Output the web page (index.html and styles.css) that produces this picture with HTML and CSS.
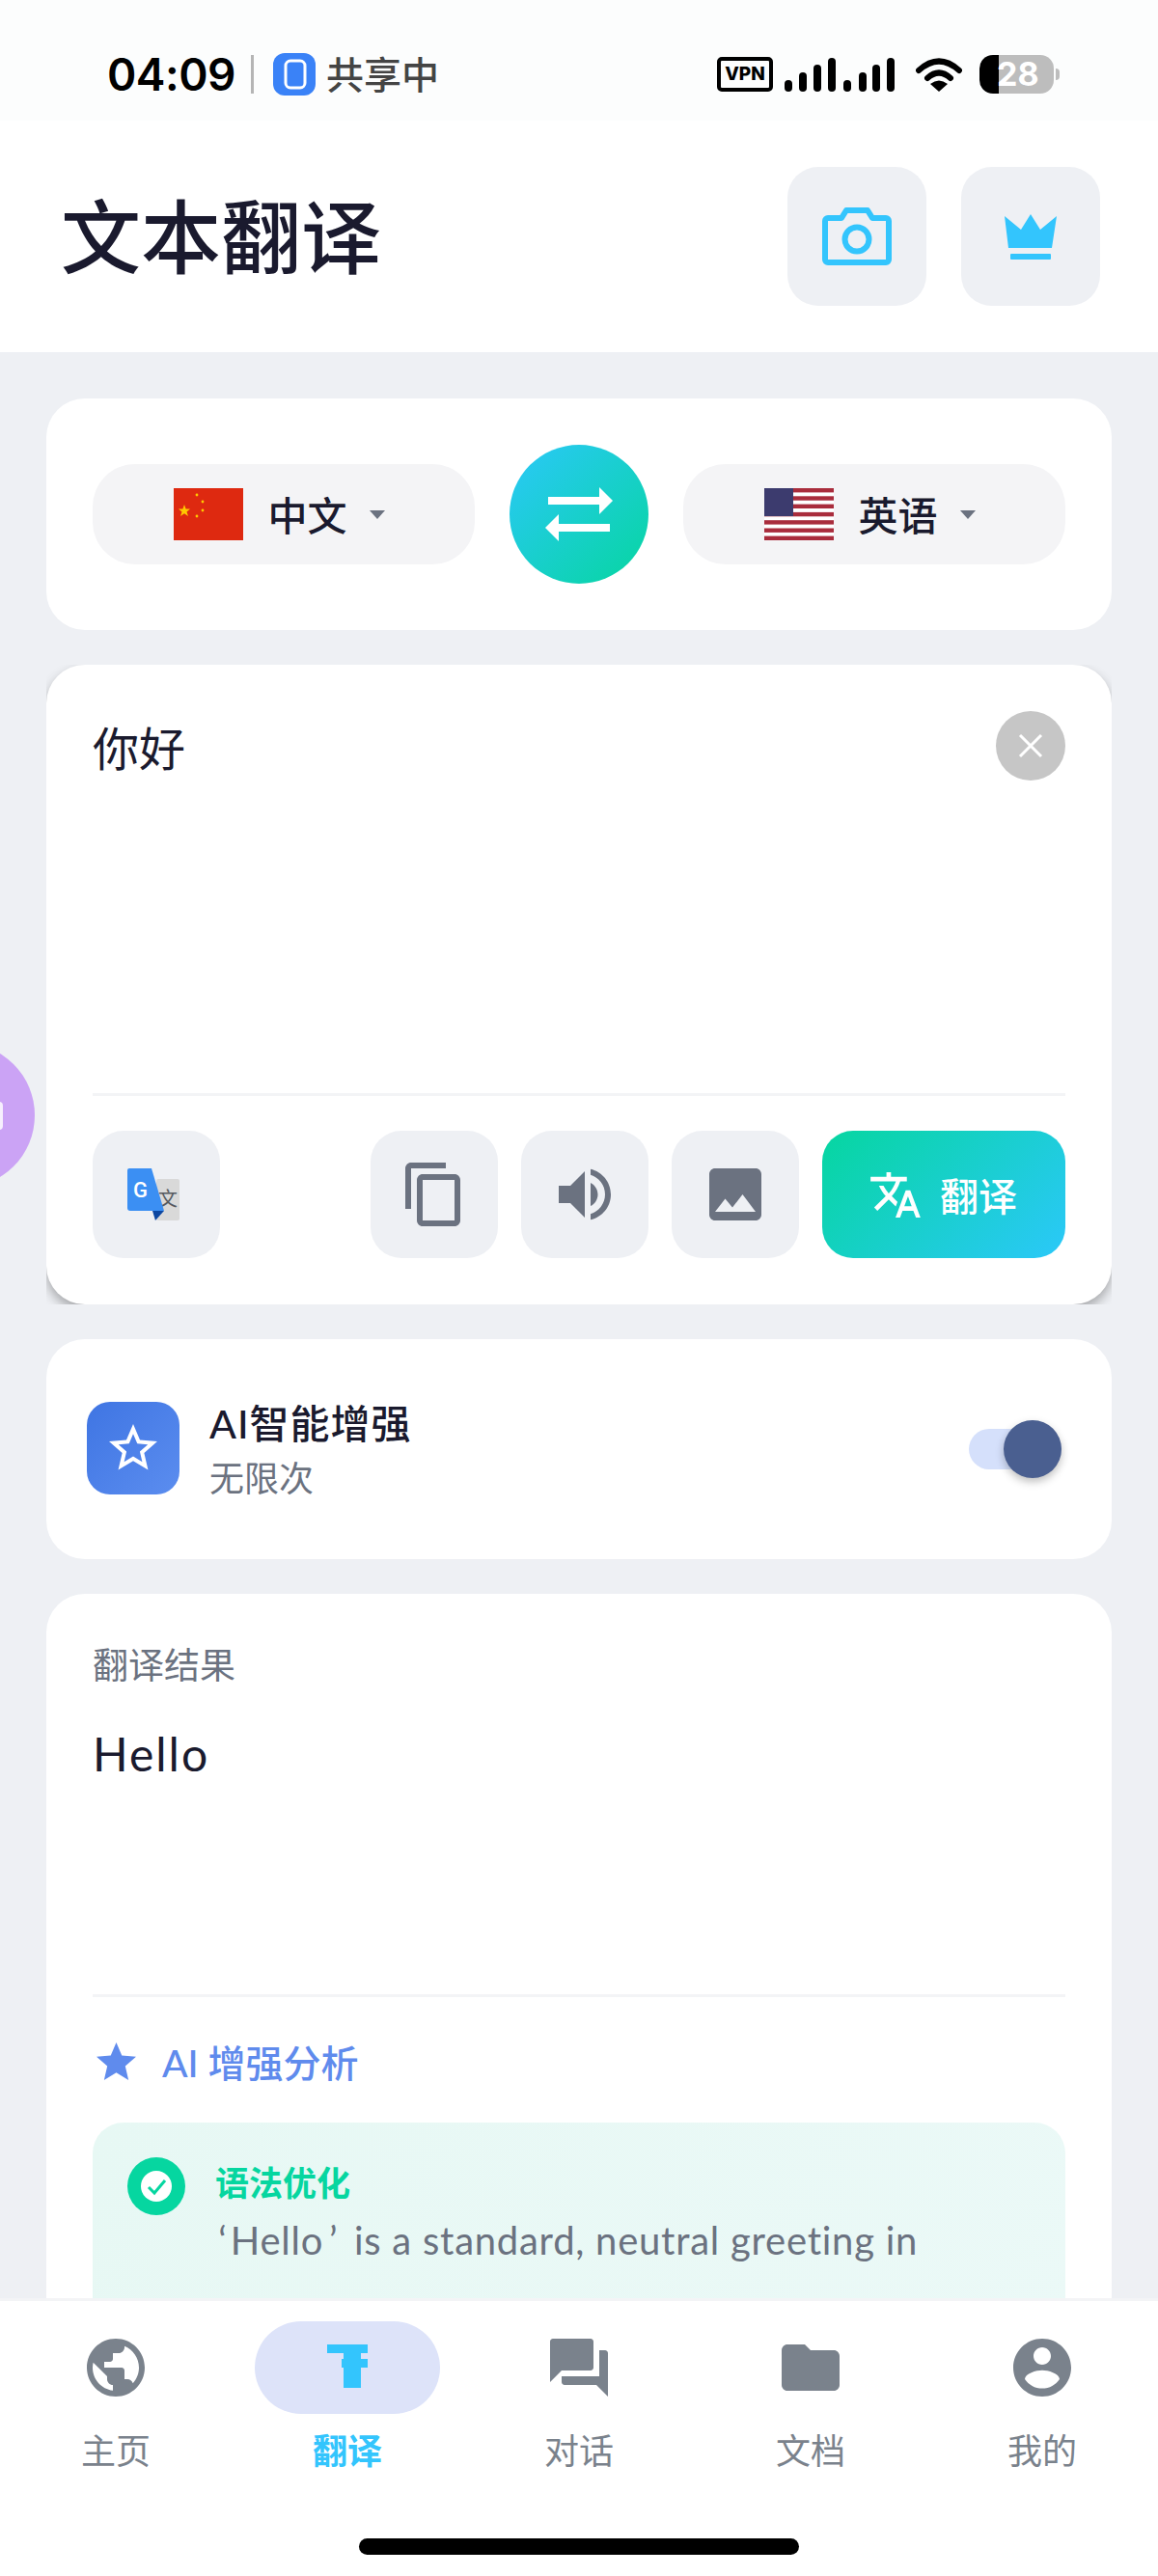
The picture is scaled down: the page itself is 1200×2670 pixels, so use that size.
FILE: index.html

```html
<!DOCTYPE html>
<html>
<head>
<meta name="viewport" content="width=device-width, initial-scale=1">
<link rel="stylesheet" href="styles.css">
</head>
<body>

<div class="phone">

  <div class="float-ball"><span class="float-mark"></span></div>

  <div class="statusbar">
    <div class="status-left">
      <span class="time">04:09</span>
      <span class="status-sep"></span>
      <svg class="share-icon" viewBox="0 0 44 44">
        <rect width="44" height="44" rx="12" fill="#3a82f7"/>
        <rect x="13" y="8" width="20" height="28" rx="5" fill="#3a82f7" stroke="#fff" stroke-width="3"/>
      </svg>
      <span class="share-text">共享中</span>
    </div>
    <div class="status-right">
      <span class="vpn">VPN</span>
      <svg class="signal" viewBox="0 0 116 36">
        <rect x="0" y="24" width="8" height="12" rx="4"/>
        <rect x="15" y="16" width="8" height="20" rx="4"/>
        <rect x="30" y="8" width="8" height="28" rx="4"/>
        <rect x="45" y="1" width="8" height="35" rx="4"/>
        <rect x="61" y="24" width="8" height="12" rx="4"/>
        <rect x="77" y="16" width="8" height="20" rx="4"/>
        <rect x="91" y="8" width="8" height="28" rx="4"/>
        <rect x="106" y="1" width="8" height="35" rx="4"/>
      </svg>
      <svg class="wifi" viewBox="0 0 48 36">
        <path d="M3 14 Q24 -5 45 14" fill="none" stroke="#000" stroke-width="6" stroke-linecap="round"/>
        <path d="M12 22 Q24 11 36 22" fill="none" stroke="#000" stroke-width="6" stroke-linecap="round"/>
        <path d="M15 28 Q24 21 33 28 L24 36 Z" fill="#000"/>
      </svg>
      <div class="battery"><span class="battery-num">28</span></div>
      <span class="battery-nub"></span>
    </div>
  </div>

  <div class="header">
    <h1 class="title">文本翻译</h1>
    <div class="header-btns">
      <button class="head-btn">
        <svg class="cam-icon" viewBox="0 0 72 60">
          <path d="M3 14 a3 3 0 0 1 3 -3 H20 L25 3 H47 L52 11 H66 a3 3 0 0 1 3 3 V54 a3 3 0 0 1 -3 3 H6 a3 3 0 0 1 -3 -3 Z"/>
          <circle cx="36" cy="33" r="12.5"/>
        </svg>
      </button>
      <button class="head-btn">
        <svg class="crown-icon" viewBox="0 0 54 48">
          <path d="M0 3 L17 17 L27 1 L37 17 L54 3 L49 36 L4 36 Z"/>
          <rect x="6" y="42" width="42" height="6" rx="1"/>
        </svg>
      </button>
    </div>
  </div>

  <div class="main">

    <div class="card lang-card">
      <div class="lang-pill">
        <svg class="flag" viewBox="0 0 72 54">
          <rect width="72" height="54" fill="#de2910"/>
          <polygon points="11,17 12.6,21.5 17,21.5 13.5,24.5 15,29 11,26.2 7,29 8.5,24.5 5,21.5 9.4,21.5" fill="#ffc800"/>
          <circle cx="24" cy="7" r="1.4" fill="#ffc800"/>
          <circle cx="30" cy="14" r="1.4" fill="#ffc800"/>
          <circle cx="30" cy="23" r="1.4" fill="#ffc800"/>
          <circle cx="24" cy="29" r="1.4" fill="#ffc800"/>
        </svg>
        <span class="lang-name">中文</span>
        <span class="caret"></span>
      </div>
      <button class="swap-btn">
        <svg class="swap-icon" viewBox="0 0 72 60">
          <rect x="3" y="12" width="54" height="8"/>
          <polygon points="56,2 70,16 56,30"/>
          <rect x="13" y="40" width="54" height="8"/>
          <polygon points="14,30 0,44 14,58"/>
        </svg>
      </button>
      <div class="lang-pill">
        <svg class="flag" viewBox="0 0 72 54">
          <rect width="72" height="54" fill="#fff"/>
          <g fill="#a92c3c">
            <rect y="0" width="72" height="4.4"/>
            <rect y="8.3" width="72" height="4.4"/>
            <rect y="16.6" width="72" height="4.4"/>
            <rect y="24.9" width="72" height="4.4"/>
            <rect y="33.2" width="72" height="4.4"/>
            <rect y="41.5" width="72" height="4.4"/>
            <rect y="49.6" width="72" height="4.4"/>
          </g>
          <rect width="30" height="29" fill="#3c3b6e"/>
        </svg>
        <span class="lang-name">英语</span>
        <span class="caret"></span>
      </div>
    </div>

    <div class="card input-card">
      <div class="input-area">
        <span class="input-text">你好</span>
        <button class="clear-btn">
          <svg class="clear-icon" viewBox="0 0 28 28"><path d="M3 3 L25 25 M25 3 L3 25" stroke="#fff" stroke-width="3"/></svg>
        </button>
      </div>
      <hr class="line">
      <div class="toolbar">
        <button class="tool-btn">
          <svg class="g-icon" viewBox="0 0 54 54">
            <rect x="30" y="11" width="24" height="43" rx="2" fill="#d9d9d9"/>
            <text x="32" y="39" class="g-wen">文</text>
            <path d="M2 0 H25 L38 44 H3 a3 3 0 0 1 -3 -3 V2 a2 2 0 0 1 2 -2z" fill="#3b8ff3"/>
            <text x="6" y="30" class="g-letter">G</text>
            <polygon points="26,44 38,44 29,54" fill="#0d47a1"/>
          </svg>
        </button>
        <span class="tool-space"></span>
        <button class="tool-btn">
          <svg class="tool-icon" viewBox="0 0 24 24"><path d="M16 1H4c-1.1 0-2 .9-2 2v14h2V3h12V1zm3 4H8c-1.1 0-2 .9-2 2v14c0 1.1.9 2 2 2h11c1.1 0 2-.9 2-2V7c0-1.1-.9-2-2-2zm0 16H8V7h11v14z"/></svg>
        </button>
        <button class="tool-btn">
          <svg class="tool-icon" viewBox="0 0 24 24"><path d="M3 9v6h4l5 5V4L7 9H3zm13.5 3c0-1.77-1.02-3.29-2.5-4.03v8.05c1.48-.73 2.5-2.25 2.5-4.02zM14 3.23v2.06c2.89.86 5 3.54 5 6.71s-2.11 5.85-5 6.71v2.06c4.01-.91 7-4.49 7-8.77s-2.99-7.86-7-8.77z"/></svg>
        </button>
        <button class="tool-btn">
          <svg class="tool-icon" viewBox="0 0 24 24"><path d="M21 19V5c0-1.1-.9-2-2-2H5c-1.1 0-2 .9-2 2v14c0 1.1.9 2 2 2h14c1.1 0 2-.9 2-2zM8.5 13.5l2.5 3.01L14.5 12l4.5 6H5l3.5-4.5z"/></svg>
        </button>
        <button class="translate-btn">
          <svg class="trans-icon" viewBox="1 2 22 20"><path d="M12.87 15.07l-2.54-2.51.03-.03c1.74-1.94 2.98-4.17 3.71-6.53H17V4h-7V2H8v2H1v1.99h11.17C11.5 7.92 10.44 9.75 9 11.35 8.07 10.32 7.3 9.19 6.69 8h-2c.73 1.63 1.73 3.17 2.98 4.56l-5.09 5.02L4 19l5-5 3.11 3.11.76-2.04zM18.5 10h-2L12 22h2l1.12-3h4.75L21 22h2l-4.5-12zm-2.62 7l1.62-4.33L19.12 17h-3.24z"/></svg>
          <span>翻译</span>
        </button>
      </div>
    </div>

    <div class="card ai-card">
      <div class="ai-icon">
        <svg class="ai-star" viewBox="0 0 24 24"><path d="M22 9.24l-7.19-.62L12 2 9.19 8.63 2 9.24l5.46 4.73L5.82 21 12 17.27 18.18 21l-1.63-7.03L22 9.24zM12 15.4l-3.76 2.27 1-4.28-3.32-2.88 4.38-.38L12 6.1l1.71 4.04 4.38.38-3.32 2.88 1 4.28L12 15.4z"/></svg>
      </div>
      <div class="ai-text">
        <div class="ai-title">AI智能增强</div>
        <div class="ai-sub">无限次</div>
      </div>
      <div class="toggle"><span class="toggle-thumb"></span></div>
    </div>

    <div class="card result-card">
      <div class="result-label">翻译结果</div>
      <div class="result-text">Hello</div>
      <hr class="line">
      <div class="enh-head">
        <svg class="enh-star" viewBox="2 2 20 19"><path d="M12 17.27L18.18 21l-1.64-7.03L22 9.24l-7.19-.61L12 2 9.19 8.63 2 9.24l5.46 4.73L5.82 21z"/></svg>
        <span>AI 增强分析</span>
      </div>
      <div class="enh-panel">
        <svg class="enh-check" viewBox="0 0 60 60">
          <circle cx="30" cy="30" r="30" fill="#06d6a0"/>
          <circle cx="30" cy="30" r="16" fill="#fff"/>
          <path d="M22 31 L28 37 L39 24" fill="none" stroke="#06d6a0" stroke-width="3"/>
        </svg>
        <div class="enh-body">
          <div class="enh-title">语法优化</div>
          <p class="enh-desc">&#8202;‘&#8202;Hello&#8201;’&#8201; is a standard, neutral greeting in English, used in both formal and informal</p>
        </div>
      </div>
    </div>

  </div>

  <div class="nav">
    <div class="nav-row">
      <div class="nav-item">
        <div class="nav-icon"><svg viewBox="2 2 20 20"><path d="M12 2C6.48 2 2 6.48 2 12s4.48 10 10 10 10-4.48 10-10S17.52 2 12 2zm-1 17.93c-3.95-.49-7-3.85-7-7.93 0-.62.08-1.21.21-1.79L9 15v1c0 1.1.9 2 2 2v1.93zm6.9-2.54c-.26-.81-1-1.39-1.9-1.39h-1v-3c0-.55-.45-1-1-1H8v-2h2c.55 0 1-.45 1-1V7h2c1.1 0 2-.9 2-2v-.41c2.93 1.19 5 4.06 5 7.41 0 2.08-.8 3.97-2.1 5.39z"/></svg></div>
        <span class="nav-label">主页</span>
      </div>
      <div class="nav-item active">
        <div class="nav-icon">
          <svg class="nav-t" viewBox="0 0 42 45">
            <rect x="0" y="0" width="42" height="9"/>
            <rect x="17" y="0" width="18" height="45"/>
            <rect x="15" y="15" width="27" height="9"/>
          </svg>
        </div>
        <span class="nav-label">翻译</span>
      </div>
      <div class="nav-item">
        <div class="nav-icon"><svg viewBox="2 2 20 20"><path d="M21 6h-2v9H6v2c0 .55.45 1 1 1h11l4 4V7c0-.55-.45-1-1-1zm-4 6V3c0-.55-.45-1-1-1H3c-.55 0-1 .45-1 1v14l4-4h10c.55 0 1-.45 1-1z"/></svg></div>
        <span class="nav-label">对话</span>
      </div>
      <div class="nav-item">
        <div class="nav-icon"><svg viewBox="2 2 20 20"><path d="M10 4H4c-1.1 0-1.99.9-1.99 2L2 18c0 1.1.9 2 2 2h16c1.1 0 2-.9 2-2V8c0-1.1-.9-2-2-2h-8l-2-2z"/></svg></div>
        <span class="nav-label">文档</span>
      </div>
      <div class="nav-item">
        <div class="nav-icon"><svg viewBox="2 2 20 20"><path d="M12 2C6.48 2 2 6.48 2 12s4.48 10 10 10 10-4.48 10-10S17.52 2 12 2zm0 3c1.66 0 3 1.34 3 3s-1.34 3-3 3-3-1.34-3-3 1.34-3 3-3zm0 14.2c-2.5 0-4.71-1.28-6-3.22.03-1.99 4-3.08 6-3.08 1.99 0 5.97 1.09 6 3.08-1.29 1.94-3.5 3.22-6 3.22z"/></svg></div>
        <span class="nav-label">我的</span>
      </div>
    </div>
    <div class="home-bar"></div>
  </div>

</div>

</body>
</html>
```

FILE: styles.css

```css
* {
    box-sizing: border-box;
}

body {
    margin: 0;
    font-family: Lato, "Noto Sans CJK SC", sans-serif;
    background-color: #eef0f4;
    color: #1a1a2e;
}

button {
    border: none;
    padding: 0;
    font-family: inherit;
    cursor: pointer;
}

.phone {
    position: relative;
    width: 1200px;
    height: 2670px;
    display: flex;
    flex-direction: column;
    overflow: hidden;
    background-color: #eef0f4;
}

.float-ball {
    position: absolute;
    left: -114px;
    top: 1081px;
    width: 150px;
    height: 150px;
    border-radius: 50%;
    background-color: #cba3f5;
}

.float-mark {
    position: absolute;
    left: 100px;
    top: 61px;
    width: 17px;
    height: 29px;
    border-radius: 4px;
    background-color: #f6effd;
}

/* status bar */
.statusbar {
    height: 125px;
    flex-shrink: 0;
    padding: 29px 102px 0 111px;
    display: flex;
    justify-content: space-between;
    align-items: center;
    background-color: #fcfdfd;
}

.status-left, .status-right {
    display: flex;
    align-items: center;
}

.time {
    font-family: Inter, sans-serif;
    font-size: 46px;
    font-weight: 600;
    letter-spacing: -0.5px;
    color: #000;
}

.status-sep {
    width: 3px;
    height: 40px;
    margin: 0 20px 0 16px;
    background-color: #b5b5b5;
}

.share-icon {
    width: 44px;
    height: 44px;
}

.share-text {
    margin-left: 11px;
    font-size: 39px;
    line-height: 44px;
    font-weight: 500;
    color: #444;
}

.vpn {
    width: 58px;
    height: 36px;
    border: 4px solid #000;
    border-radius: 5px;
    font-family: Inter, sans-serif;
    font-size: 19px;
    font-weight: 800;
    line-height: 28px;
    text-align: center;
    color: #000;
}

.signal {
    width: 116px;
    height: 36px;
    margin-left: 12px;
}

.wifi {
    width: 48px;
    height: 36px;
    margin-left: 20px;
}

.battery {
    width: 77px;
    height: 40px;
    margin-left: 18px;
    border-radius: 14px;
    background: linear-gradient(90deg, #000 20px, #bdbdbd 20px);
    padding-left: 18px;
}

.battery-num {
    font-family: Inter, sans-serif;
    font-size: 34px;
    font-weight: 700;
    line-height: 40px;
    color: #fff;
}

.battery-nub {
    width: 4px;
    height: 12px;
    margin-left: 2px;
    border-radius: 0 4px 4px 0;
    background-color: #bdbdbd;
}

/* header */
.header {
    height: 240px;
    flex-shrink: 0;
    padding: 0 60px 0 63px;
    display: flex;
    justify-content: space-between;
    align-items: center;
    background-color: white;
}

.title {
    margin: 0 0 8px;
    font-size: 83px;
    font-weight: 500;
    color: #1a1a2e;
}

.header-btns {
    display: flex;
    gap: 36px;
}

.head-btn {
    width: 144px;
    height: 144px;
    border-radius: 32px;
    background-color: #eef0f4;
    display: flex;
    align-items: center;
    justify-content: center;
}

.cam-icon {
    width: 72px;
    height: 60px;
    fill: none;
    stroke: #33c5fd;
    stroke-width: 6;
    stroke-linejoin: round;
}

.crown-icon {
    width: 54px;
    height: 48px;
    fill: #33c5fd;
}

/* cards */
.main {
    flex: 1;
    min-height: 0;
    padding: 48px 48px 0;
    display: flex;
    flex-direction: column;
    gap: 36px;
    overflow: hidden;
}

.card {
    flex-shrink: 0;
    background-color: white;
    border-radius: 40px;
}

.lang-card {
    padding: 48px;
    display: flex;
    align-items: center;
    gap: 36px;
}

.lang-pill {
    flex: 1;
    height: 104px;
    padding-right: 10px;
    border-radius: 44px;
    background-color: #f4f4f6;
    display: flex;
    align-items: center;
    justify-content: center;
}

.flag {
    width: 72px;
    height: 54px;
}

.lang-name {
    margin-left: 26px;
    margin-bottom: 2px;
    font-size: 41px;
    font-weight: 500;
}

.caret {
    margin-left: 23px;
    border-left: 8px solid transparent;
    border-right: 8px solid transparent;
    border-top: 9px solid #6b7280;
}

.swap-btn {
    width: 144px;
    height: 144px;
    border-radius: 50%;
    background: linear-gradient(135deg, #2bc8f9, #06d6a0);
    display: flex;
    align-items: center;
    justify-content: center;
}

.swap-icon {
    width: 72px;
    height: 60px;
    margin-left: 2px;
    fill: white;
}

.input-card {
    padding: 48px;
    box-shadow: 0 6px 12px rgba(0, 0, 0, 0.3);
    clip-path: inset(0);
}

.input-area {
    height: 396px;
    display: flex;
    justify-content: space-between;
    align-items: flex-start;
}

.input-text {
    padding-top: 7px;
    font-size: 48px;
    line-height: 64px;
    color: #1a1a2e;
}

.clear-btn {
    width: 72px;
    height: 72px;
    border-radius: 50%;
    background-color: #c6c6c6;
    display: flex;
    align-items: center;
    justify-content: center;
}

.clear-icon {
    width: 28px;
    height: 28px;
}

.line {
    height: 3px;
    margin: 0;
    border: none;
    background-color: #f3f4f6;
}

.toolbar {
    margin-top: 36px;
    display: flex;
    gap: 24px;
}

.tool-space {
    flex: 1;
}

.tool-btn {
    width: 132px;
    height: 132px;
    border-radius: 32px;
    background-color: #eef0f4;
    display: flex;
    align-items: center;
    justify-content: center;
}

.tool-icon {
    width: 72px;
    height: 72px;
    fill: #6b7280;
}

.g-icon {
    width: 54px;
    height: 54px;
    margin-right: 6px;
}

.g-letter {
    font-family: Roboto, sans-serif;
    font-size: 22px;
    font-weight: 500;
    fill: white;
}

.g-wen {
    font-family: "Noto Sans CJK SC", sans-serif;
    font-size: 20px;
    fill: #55595f;
}

.translate-btn {
    width: 252px;
    height: 132px;
    border-radius: 32px;
    background: linear-gradient(135deg, #06d6a0, #2bc8f9);
    display: flex;
    align-items: center;
    justify-content: center;
    gap: 20px;
    color: white;
    font-size: 40px;
    font-weight: 500;
}

.trans-icon {
    width: 52px;
    height: 47px;
    fill: white;
}

.ai-card {
    height: 228px;
    padding: 0 52px 0 42px;
    display: flex;
    align-items: center;
}

.ai-icon {
    width: 96px;
    height: 96px;
    margin-bottom: 2px;
    border-radius: 24px;
    background: linear-gradient(135deg, #3f75e3, #5b8def);
    display: flex;
    align-items: center;
    justify-content: center;
}

.ai-star {
    width: 60px;
    height: 60px;
    fill: white;
}

.ai-text {
    flex: 1;
    margin-left: 31px;
}

.ai-title {
    font-size: 41px;
    font-weight: 500;
    line-height: 54px;
    letter-spacing: 1px;
}

.ai-sub {
    margin-top: 6px;
    font-size: 36px;
    line-height: 46px;
    color: #6b7280;
}

.toggle {
    position: relative;
    width: 96px;
    height: 42px;
    border-radius: 21px;
    background-color: #d5e0fb;
}

.toggle-thumb {
    position: absolute;
    right: 0;
    top: -9px;
    width: 60px;
    height: 60px;
    border-radius: 50%;
    background-color: #4a5f90;
    box-shadow: 0 4px 8px rgba(0, 0, 0, 0.25);
}

.result-card {
    padding: 48px 48px 60px;
}

.result-label {
    font-size: 37px;
    line-height: 52px;
    color: #6b7280;
}

.result-text {
    height: 282px;
    margin-top: 33px;
    font-size: 48px;
    line-height: 66px;
    letter-spacing: 2px;
    color: #1a1a2e;
}

.enh-head {
    height: 60px;
    margin-top: 36px;
    display: flex;
    align-items: center;
    gap: 27px;
    font-size: 39px;
    font-weight: 500;
    color: #5f8bed;
}

.enh-star {
    width: 41px;
    height: 39px;
    margin-left: 4px;
    fill: #5f8bed;
}

.enh-panel {
    margin-top: 34px;
    padding: 36px;
    border-radius: 32px;
    background: linear-gradient(115deg, #e7f8f4, #ebf9f7);
    display: flex;
    gap: 31px;
}

.enh-check {
    width: 60px;
    height: 60px;
    flex-shrink: 0;
}

.enh-body {
    flex: 1;
}

.enh-title {
    font-size: 35px;
    font-weight: 700;
    line-height: 52px;
    color: #06d6a0;
}

.enh-desc {
    margin: -4px 0 0;
    font-size: 40px;
    line-height: 77px;
    letter-spacing: 0.75px;
    color: #6b7280;
}

/* bottom nav */
.nav {
    height: 288px;
    flex-shrink: 0;
    border-top: 3px solid #f3f4f6;
    background-color: white;
}

.nav-row {
    display: grid;
    grid-template-columns: repeat(5, 1fr);
    padding-top: 21px;
}

.nav-item {
    display: flex;
    flex-direction: column;
    align-items: center;
}

.nav-icon {
    width: 192px;
    height: 96px;
    border-radius: 48px;
    display: flex;
    align-items: center;
    justify-content: center;
}

.nav-icon svg {
    width: 60px;
    height: 60px;
    fill: #7a828c;
}

.nav-icon .nav-t {
    width: 42px;
    height: 45px;
    margin-bottom: 3px;
    fill: #33c5fd;
}

.nav-item.active .nav-icon {
    background-color: #dde3f9;
}

.nav-label {
    margin-top: 16px;
    font-size: 36px;
    line-height: 44px;
    color: #7a828c;
}

.nav-item.active .nav-label {
    font-weight: 700;
    color: #33c5fd;
}

.home-bar {
    width: 456px;
    height: 17px;
    margin: 69px auto 0;
    border-radius: 9px;
    background-color: black;
}
```
